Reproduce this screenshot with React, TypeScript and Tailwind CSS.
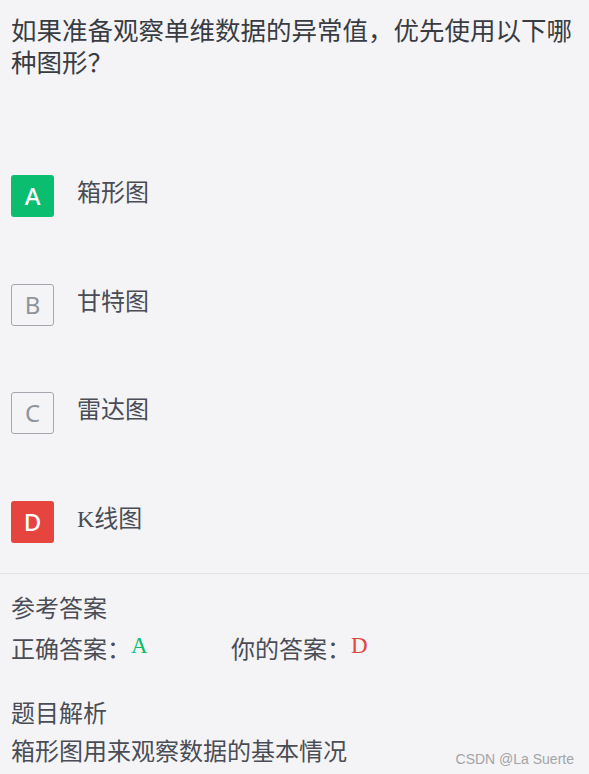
import React from "react";

const options = [
  { key: "A", label: "箱形图", state: "correct" },
  { key: "B", label: "甘特图", state: "none" },
  { key: "C", label: "雷达图", state: "none" },
  { key: "D", label: "K线图", state: "wrong" },
];

function Box({ k, state }: { k: string; state: string }) {
  if (state === "correct")
    return (
      <div className="flex h-[42px] w-[43px] shrink-0 items-center justify-center rounded-[3px] bg-[#0bbd6e] text-[24px] font-medium leading-none text-white">
        {k}
      </div>
    );
  if (state === "wrong")
    return (
      <div className="flex h-[42px] w-[43px] shrink-0 items-center justify-center rounded-[3px] bg-[#e5453e] text-[24px] font-medium leading-none text-white">
        {k}
      </div>
    );
  return (
    <div className="flex h-[42px] w-[43px] shrink-0 items-center justify-center rounded-[3px] border border-[#a4a7ae] text-[24px] leading-none text-[#8f939a]">
      {k}
    </div>
  );
}

export default function App() {
  return (
    <div className="relative h-[774px] w-full overflow-hidden bg-[#f4f4f7] font-['Noto_Sans','Noto_Sans_CJK_SC',sans-serif] text-[#4a4d55]">
      <div className="px-[11px] pt-[14px] text-[25.5px] leading-[32px] text-[#393c43]">
        如果准备观察单维数据的异常值，优先使用以下哪种图形？
      </div>

      <div className="mt-[97px] flex flex-col gap-[66.5px] px-[11px]">
        {options.map((o) => (
          <div key={o.key} className="flex items-start">
            <Box k={o.key} state={o.state} />
            <div className="ml-[23px] mt-[1px] text-[24px] leading-[32px]">
              {o.label.startsWith("K") ? (
                <>
                  <span className="font-['Liberation_Serif',serif]">K</span>
                  {o.label.slice(1)}
                </>
              ) : (
                o.label
              )}
            </div>
          </div>
        ))}
      </div>

      <div className="mt-[30px] border-t border-[#e3e3ea]" />

      <div className="px-[11px] pt-[15px] text-[24px] leading-[38px]">
        <div>参考答案</div>
        <div className="flex">
          <div className="w-[220px]">
            正确答案：
            <span className="align-[5px] font-['Liberation_Serif',serif] text-[23px] text-[#0bbd6e]">A</span>
          </div>
          <div>
            你的答案：
            <span className="align-[5px] font-['Liberation_Serif',serif] text-[23px] text-[#e5453e]">D</span>
          </div>
        </div>
        <div className="mt-[26.5px]">题目解析</div>
        <div>箱形图用来观察数据的基本情况</div>
      </div>

      <div className="absolute bottom-[6px] right-[15px] font-['Liberation_Sans',sans-serif] text-[14px] leading-[18px] text-[#a3a3a6]">
        CSDN @La Suerte
      </div>
    </div>
  );
}
